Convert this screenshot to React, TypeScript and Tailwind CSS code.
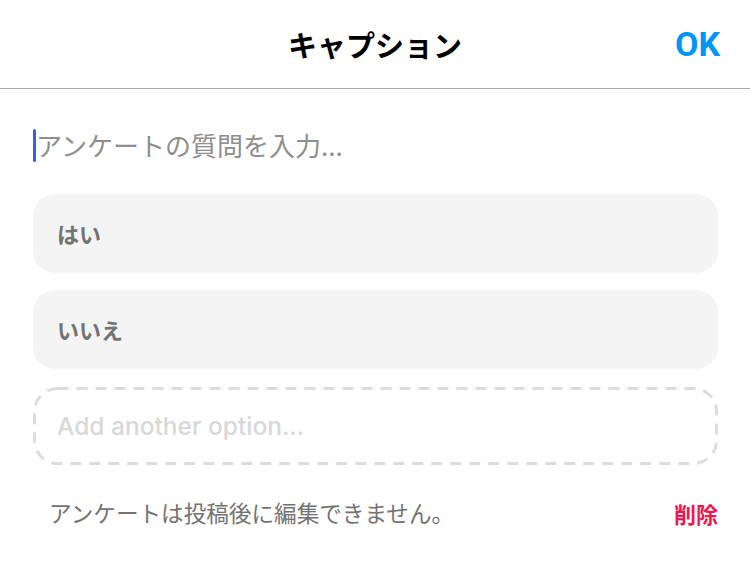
import React from "react";

const jp = "font-['Noto_Sans_CJK_JP',sans-serif]";
const latin = "font-['Roboto','Noto_Sans_CJK_JP',sans-serif]";

function OptionRow({ label }: { label: string }) {
  return (
    <div className="flex h-[79px] items-center rounded-[22px] bg-[#f4f4f4] pl-6">
      <span className={`${jp} text-[22px] font-bold text-[#737373]`}>{label}</span>
    </div>
  );
}

function DashedOption() {
  return (
    <div className="relative mt-px flex h-[78px] items-center pl-6">
      <svg className="pointer-events-none absolute inset-0 h-full w-full" preserveAspectRatio="none">
        <rect
          x="1.5"
          y="1.5"
          width="calc(100% - 3px)"
          height="calc(100% - 3px)"
          rx="23"
          fill="none"
          stroke="#dcdcdc"
          strokeWidth="3"
          strokeDasharray="11 8"
        />
      </svg>
      <span className="font-['Inter',sans-serif] text-[24.5px] font-medium text-[#d8d8d8]">Add another option...</span>
    </div>
  );
}

export default function App() {
  return (
    <main className="h-[574px] w-[750px] overflow-hidden bg-white">
      <header className="relative flex h-[89px] items-center justify-center border-b border-[#a8a8a8]">
        <h1 className={`${jp} text-[29px] font-bold leading-none text-black`}>キャプション</h1>
        <button className={`${latin} absolute right-[30px] top-[27px] text-[34px] font-bold leading-none text-[#0095f6]`}>
          OK
        </button>
      </header>

      <section className="pl-[33px] pr-[32px] pt-[39px]">
        <div className="flex h-[34px] items-center">
          <span className="h-[33px] w-[3px] rounded-sm bg-[#3a5cf5]" />
          <span className={`${jp} text-[26px] leading-[34px] text-[#8e8e8e]`}>アンケートの質問を入力...</span>
        </div>

        <div className="mt-[32px] flex flex-col gap-[17px]">
          <OptionRow label="はい" />
          <OptionRow label="いいえ" />
          <DashedOption />
        </div>

        <div className="mt-[33px] flex h-[30px] items-center justify-between pl-4">
          <span className={`${jp} text-[22.6px] text-[#737373]`}>アンケートは投稿後に編集できません。</span>
          <button className={`${jp} text-[22px] font-bold text-[#ed1651]`}>削除</button>
        </div>
      </section>
    </main>
  );
}
